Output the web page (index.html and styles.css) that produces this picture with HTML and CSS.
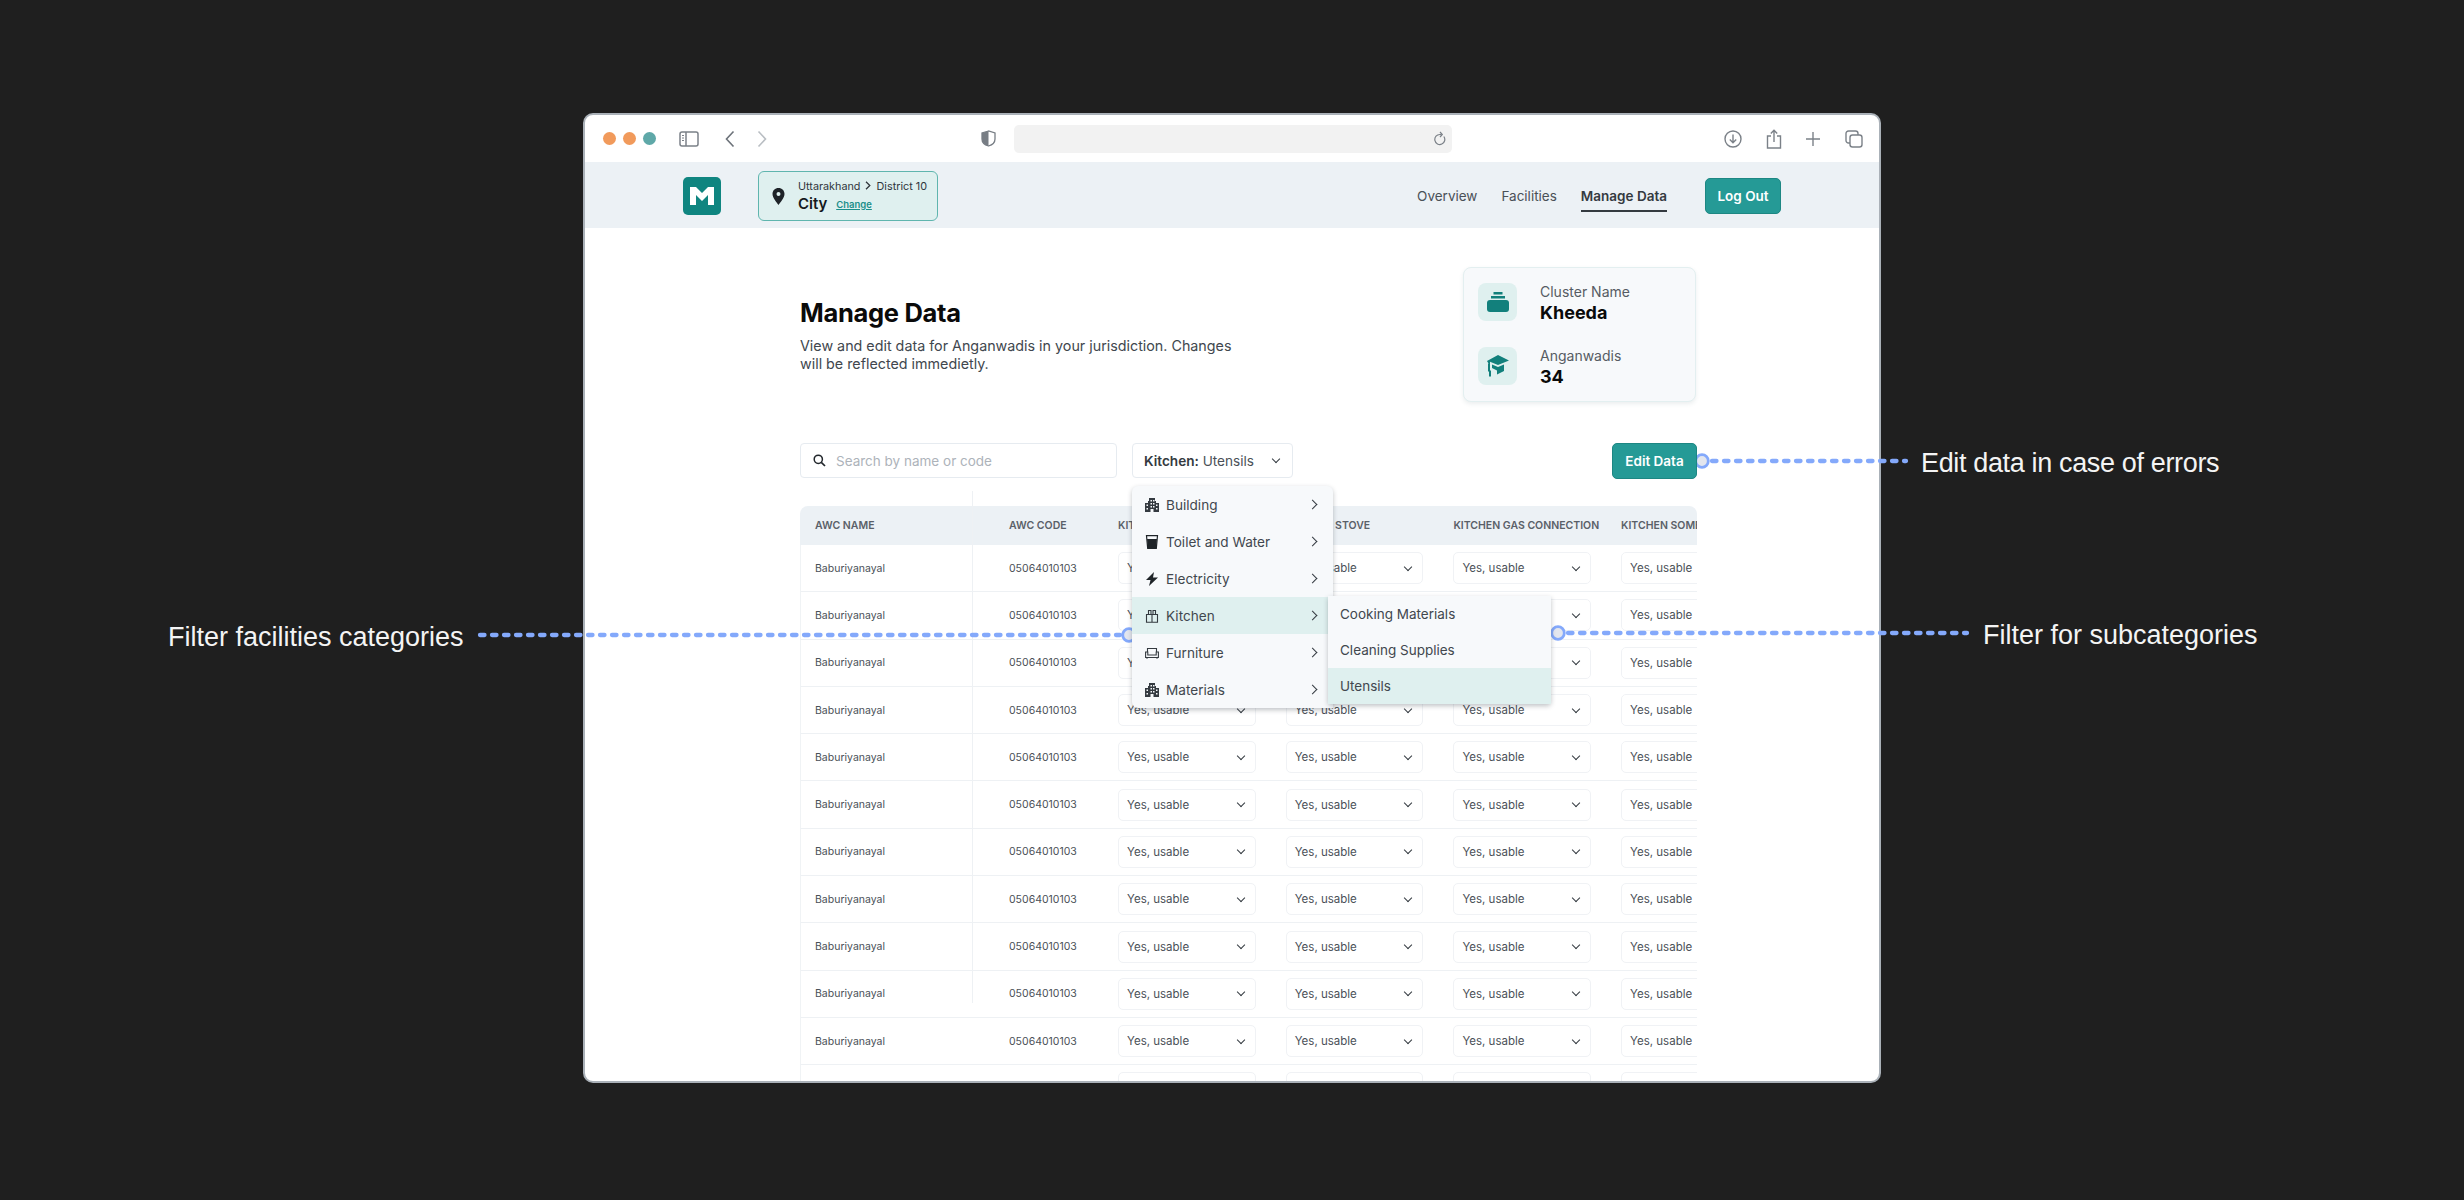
FILE: index.html
```html
<!DOCTYPE html>
<html>
<head>
  <meta name="viewport" content="width=device-width, initial-scale=1.0">
  <title>Manage Data</title>
  <link rel="stylesheet" href="styles.css">
</head>
<body>
  <svg class="sprite" width="0" height="0">
    <symbol id="i-building" viewBox="0 0 14 14">
      <path fill="#343a40" fill-rule="evenodd" d="M4 0h6v3h1v2h3v9H8.500v-3h-3v3H0V5h3V3h1zM5.500 2v1.500H7V2zM8 2v1.500h1.500V2zM5.500 5v1.500H7V5zM8 5v1.500h1.500V5zM1.500 6.500V8H3V6.500zM11 6.500V8h1.500V6.500zM5.500 8v1.500H7V8zM8 8v1.500h1.500V8zM1.500 10v1.500H3V10zM11 10v1.500h1.500V10z"/>
    </symbol>
  </svg>

  <!-- browser window -->
  <div class="window">
    <div class="browser-bar">
      <div class="lights">
        <span class="light light-orange"></span>
        <span class="light light-orange"></span>
        <span class="light light-teal"></span>
      </div>
      <svg class="bar-icon sidebar-icon" width="20" height="16" viewBox="0 0 20 16">
        <rect x="1" y="1" width="18" height="14" rx="2" fill="none" stroke="#7b8188" stroke-width="1.500"/>
        <path d="M7 1v14" stroke="#7b8188" stroke-width="1.500"/>
        <path d="M3 4.500h2M3 7h2M3 9.500h2" stroke="#7b8188"/>
      </svg>
      <svg class="bar-icon back-icon" width="10" height="18" viewBox="0 0 10 18">
        <path d="M8.500 1.500 1.500 9l7 7.500" fill="none" stroke="#6d737a" stroke-width="1.600"/>
      </svg>
      <svg class="bar-icon forward-icon" width="10" height="18" viewBox="0 0 10 18">
        <path d="M1.500 1.500 8.500 9l-7 7.500" fill="none" stroke="#b9bec3" stroke-width="1.600"/>
      </svg>
      <svg class="bar-icon shield-icon" width="15" height="17" viewBox="0 0 15 17">
        <path d="M7.500 1 1 3v6c0 3.500 3 6 6.500 7 3.500-1 6.500-3.500 6.500-7V3z" fill="#fff" stroke="#777d84" stroke-width="1.300"/>
        <path d="M7.500 1 1 3v6c0 3.500 3 6 6.500 7z" fill="#777d84"/>
      </svg>
      <div class="url-bar">
        <svg width="12" height="15" viewBox="0 0 12 15">
          <path d="M9.800 5.500A5 5 0 1 1 6 3.500h1.500" fill="none" stroke="#7b8188" stroke-width="1.200"/>
          <path d="M6 1l2.300 2.500L6 6" fill="none" stroke="#7b8188" stroke-width="1.200"/>
        </svg>
      </div>
      <div class="bar-actions">
        <svg width="18" height="18" viewBox="0 0 18 18">
          <circle cx="9" cy="9" r="8" fill="none" stroke="#7b8188" stroke-width="1.400"/>
          <path d="M9 4.500v8M5.800 9.500 9 12.700l3.200-3.200" fill="none" stroke="#7b8188" stroke-width="1.400"/>
        </svg>
        <svg width="16" height="20" viewBox="0 0 16 20">
          <path d="M5 7H1.500v12h13V7H11" fill="none" stroke="#7b8188" stroke-width="1.400"/>
          <path d="M8 13V1.500M4.800 4.500 8 1.300l3.200 3.200" fill="none" stroke="#7b8188" stroke-width="1.400"/>
        </svg>
        <svg width="16" height="16" viewBox="0 0 16 16">
          <path d="M8 1v14M1 8h14" stroke="#7b8188" stroke-width="1.400"/>
        </svg>
        <svg width="18" height="18" viewBox="0 0 18 18">
          <rect x="1" y="1" width="12" height="12" rx="2.500" fill="none" stroke="#7b8188" stroke-width="1.400"/>
          <rect x="5" y="5" width="12" height="12" rx="2.500" fill="#fff" stroke="#7b8188" stroke-width="1.400"/>
        </svg>
      </div>
    </div>

    <nav class="app-nav">
      <div class="logo">
        <svg width="24" height="18" viewBox="0 0 24 18">
          <path fill="#fff" d="M0 0h6l6 6 6-6h6v18h-6V8l-6 6-6-6v10H0z"/>
        </svg>
      </div>
      <div class="location">
        <svg width="13" height="17" viewBox="0 0 13 17">
          <path fill="#1e2328" fill-rule="evenodd" d="M6.500 0C3 0 .5 2.600.5 6c0 4 4.300 8.500 6 11 1.700-2.500 6-7 6-11 0-3.400-2.500-6-6-6zm0 4a2 2 0 1 1 0 4 2 2 0 0 1 0-4z"/>
        </svg>
        <div class="location-text">
          <div class="location-path">Uttarakhand
            <svg width="6" height="9" viewBox="0 0 6 9"><path d="M1 .8 4.800 4.500 1 8.200" fill="none" stroke="#30363c" stroke-width="1.300"/></svg>
            District 10</div>
          <div class="location-city">City <a class="location-change">Change</a></div>
        </div>
      </div>
      <div class="nav-links">
        <a class="nav-link">Overview</a>
        <a class="nav-link">Facilities</a>
        <a class="nav-link nav-link-active">Manage Data</a>
      </div>
      <button class="btn btn-logout">Log Out</button>
    </nav>

    <main class="content">
      <div class="page-head">
        <div class="page-intro">
          <h1 class="page-title">Manage Data</h1>
          <p class="page-desc">View and edit data for Anganwadis in your jurisdiction. Changes will be reflected immedietly.</p>
        </div>
        <div class="summary-card">
          <div class="summary-row">
            <div class="summary-icon">
              <svg width="22" height="20" viewBox="0 0 22 20">
                <path fill="#12807c" d="M6.500 0h9v2.500h-9zM4 4h14v2.500H4z"/>
                <rect y="8" width="22" height="12" rx="3" fill="#12807c"/>
              </svg>
            </div>
            <div>
              <div class="summary-label">Cluster Name</div>
              <div class="summary-value">Kheeda</div>
            </div>
          </div>
          <div class="summary-row">
            <div class="summary-icon">
              <svg width="24" height="24" viewBox="0 0 24 24">
                <path fill="#12807c" d="M12 1 23 6.500 12 11 4 7.800V12L1 7z"/>
                <path fill="#12807c" d="M6 10.500 12 13l6-2.500v6.500l-7 3.500v-4L6 14zM2 9.500h2v7H5v6H3v-5H2z"/>
              </svg>
            </div>
            <div>
              <div class="summary-label">Anganwadis</div>
              <div class="summary-value">34</div>
            </div>
          </div>
        </div>
      </div>

      <div class="controls">
        <div class="search">
          <svg width="13" height="13" viewBox="0 0 13 13">
            <circle cx="5.300" cy="5.300" r="4.100" fill="none" stroke="#22272c" stroke-width="1.500"/>
            <path d="M8.300 8.300 12 12" stroke="#22272c" stroke-width="1.700"/>
          </svg>
          <span>Search by name or code</span>
        </div>
        <div class="filter"><span><b>Kitchen:</b> Utensils</span><i class="chev-down"></i></div>
        <button class="btn btn-edit">Edit Data</button>

        <!-- category menu -->
        <ul class="menu">
          <li class="menu-item">
            <svg class="menu-icon" viewBox="0 0 14 14"><use href="#i-building"/></svg>Building<i class="chev-right"></i>
          </li>
          <li class="menu-item">
            <svg class="menu-icon" viewBox="0 0 14 14">
              <path d="M1.500 .7h11L11.300 13.300H2.700z" fill="none" stroke="#1f2428" stroke-width="1.200"/>
              <path d="M2 4h10l-1 10H3z" fill="#1f2428"/>
            </svg>Toilet and Water<i class="chev-right"></i>
          </li>
          <li class="menu-item">
            <svg class="menu-icon" viewBox="0 0 14 14"><path fill="#1f2428" d="M9 0 1 8h4.500L4 14l9-8.500H8z"/></svg>Electricity<i class="chev-right"></i>
          </li>
          <li class="menu-item menu-item-open">
            <svg class="menu-icon" viewBox="0 0 14 14">
              <path d="M1.500 5.500h11v7.700h-11zM7 5.500v7.700M3.500 5.500V1.500h2.500v4M8 5.500V1.500h2.500v4" fill="none" stroke="#343a40" stroke-width="1.100"/>
            </svg>Kitchen<i class="chev-right"></i>
            <ul class="submenu">
              <li class="submenu-item">Cooking Materials</li>
              <li class="submenu-item">Cleaning Supplies</li>
              <li class="submenu-item submenu-item-active">Utensils</li>
            </ul>
          </li>
          <li class="menu-item">
            <svg class="menu-icon" viewBox="0 0 14 14">
              <path d="M2.500 6V2.500h9V6M.6 6h2.200v3h8.400V6h2.200v5.500H.6zM2 11.500v1.300M12 11.500v1.300" fill="none" stroke="#343a40" stroke-width="1.100"/>
            </svg>Furniture<i class="chev-right"></i>
          </li>
          <li class="menu-item">
            <svg class="menu-icon" viewBox="0 0 14 14"><use href="#i-building"/></svg>Materials<i class="chev-right"></i>
          </li>
        </ul>
      </div>

      <div class="table-area">
        <span class="col-line"></span>
        <div class="table">
          <div class="table-row table-head">
            <div class="cell-name">AWC NAME</div>
            <div>AWC CODE</div>
            <div>KITCHEN UTENSILS</div>
            <div>KITCHEN STOVE</div>
            <div>KITCHEN GAS CONNECTION</div>
            <div>KITCHEN SOMETHING</div>
          </div>
          <div class="table-row">
            <div class="cell-name">Baburiyanayal</div><div>05064010103</div>
            <div class="select">Yes, usable<i class="chev-down"></i></div><div class="select">Yes, usable<i class="chev-down"></i></div><div class="select">Yes, usable<i class="chev-down"></i></div><div class="select">Yes, usable<i class="chev-down"></i></div>
          </div>
          <div class="table-row">
            <div class="cell-name">Baburiyanayal</div><div>05064010103</div>
            <div class="select">Yes, usable<i class="chev-down"></i></div><div class="select">Yes, usable<i class="chev-down"></i></div><div class="select">Yes, usable<i class="chev-down"></i></div><div class="select">Yes, usable<i class="chev-down"></i></div>
          </div>
          <div class="table-row">
            <div class="cell-name">Baburiyanayal</div><div>05064010103</div>
            <div class="select">Yes, usable<i class="chev-down"></i></div><div class="select">Yes, usable<i class="chev-down"></i></div><div class="select">Yes, usable<i class="chev-down"></i></div><div class="select">Yes, usable<i class="chev-down"></i></div>
          </div>
          <div class="table-row">
            <div class="cell-name">Baburiyanayal</div><div>05064010103</div>
            <div class="select">Yes, usable<i class="chev-down"></i></div><div class="select">Yes, usable<i class="chev-down"></i></div><div class="select">Yes, usable<i class="chev-down"></i></div><div class="select">Yes, usable<i class="chev-down"></i></div>
          </div>
          <div class="table-row">
            <div class="cell-name">Baburiyanayal</div><div>05064010103</div>
            <div class="select">Yes, usable<i class="chev-down"></i></div><div class="select">Yes, usable<i class="chev-down"></i></div><div class="select">Yes, usable<i class="chev-down"></i></div><div class="select">Yes, usable<i class="chev-down"></i></div>
          </div>
          <div class="table-row">
            <div class="cell-name">Baburiyanayal</div><div>05064010103</div>
            <div class="select">Yes, usable<i class="chev-down"></i></div><div class="select">Yes, usable<i class="chev-down"></i></div><div class="select">Yes, usable<i class="chev-down"></i></div><div class="select">Yes, usable<i class="chev-down"></i></div>
          </div>
          <div class="table-row">
            <div class="cell-name">Baburiyanayal</div><div>05064010103</div>
            <div class="select">Yes, usable<i class="chev-down"></i></div><div class="select">Yes, usable<i class="chev-down"></i></div><div class="select">Yes, usable<i class="chev-down"></i></div><div class="select">Yes, usable<i class="chev-down"></i></div>
          </div>
          <div class="table-row">
            <div class="cell-name">Baburiyanayal</div><div>05064010103</div>
            <div class="select">Yes, usable<i class="chev-down"></i></div><div class="select">Yes, usable<i class="chev-down"></i></div><div class="select">Yes, usable<i class="chev-down"></i></div><div class="select">Yes, usable<i class="chev-down"></i></div>
          </div>
          <div class="table-row">
            <div class="cell-name">Baburiyanayal</div><div>05064010103</div>
            <div class="select">Yes, usable<i class="chev-down"></i></div><div class="select">Yes, usable<i class="chev-down"></i></div><div class="select">Yes, usable<i class="chev-down"></i></div><div class="select">Yes, usable<i class="chev-down"></i></div>
          </div>
          <div class="table-row">
            <div class="cell-name">Baburiyanayal</div><div>05064010103</div>
            <div class="select">Yes, usable<i class="chev-down"></i></div><div class="select">Yes, usable<i class="chev-down"></i></div><div class="select">Yes, usable<i class="chev-down"></i></div><div class="select">Yes, usable<i class="chev-down"></i></div>
          </div>
          <div class="table-row">
            <div class="cell-name">Baburiyanayal</div><div>05064010103</div>
            <div class="select">Yes, usable<i class="chev-down"></i></div><div class="select">Yes, usable<i class="chev-down"></i></div><div class="select">Yes, usable<i class="chev-down"></i></div><div class="select">Yes, usable<i class="chev-down"></i></div>
          </div>
          <div class="table-row">
            <div class="select select-blank"></div><div class="select"></div><div class="select"></div><div class="select"></div>
          </div>
        </div>
      </div>
    </main>
  </div>

  <!-- callouts -->
  <svg class="callout-lines" width="2464" height="1200" viewBox="0 0 2464 1200">
    <path class="callout-dash" d="M480 635H1120"/>
    <path class="callout-dash" d="M1712 461H1906"/>
    <path class="callout-dash" d="M1568 633H1967"/>
    <circle class="callout-dot" cx="1129" cy="635" r="6.300"/>
    <circle class="callout-dot" cx="1702" cy="461" r="6.300"/>
    <circle class="callout-dot" cx="1558" cy="633" r="6.300"/>
  </svg>
  <div class="callout callout-filter">Filter facilities categories</div>
  <div class="callout callout-edit">Edit data in case of errors</div>
  <div class="callout callout-sub">Filter for subcategories</div>
</body>
</html>
```

FILE: styles.css
```css
* {
  margin: 0;
  padding: 0;
  box-sizing: border-box;
}

body {
  width: 2464px;
  height: 1200px;
  padding: 113px 0 0 583px;
  background: #1f1f1f;
  font-family: Inter, "Liberation Sans", sans-serif;
  color: #4a5057;
  overflow: hidden;
  position: relative;
}

.sprite {
  position: absolute;
}

ul {
  list-style: none;
}

/* Browser window */
.window {
  width: 1298px;
  height: 970px;
  background: #fff;
  border: 2px solid #aab1b8;
  border-radius: 10px;
  overflow: hidden;
}

.browser-bar {
  height: 47px;
  display: flex;
  align-items: center;
  padding-left: 18px;
}

.lights {
  display: flex;
  gap: 7px;
}

.light {
  width: 13px;
  height: 13px;
  border-radius: 50%;
}

.light-orange {
  background: #f19a5b;
}

.light-teal {
  background: #5fa8a8;
}

.sidebar-icon {
  margin-left: 23px;
}

.back-icon {
  margin-left: 26px;
}

.forward-icon {
  margin-left: 22px;
}

.shield-icon {
  margin-left: 214px;
}

.url-bar {
  width: 438px;
  height: 28px;
  margin-left: 18px;
  display: flex;
  align-items: center;
  justify-content: flex-end;
  padding-right: 6px;
  background: #f2f2f2;
  border-radius: 5px;
}

.bar-actions {
  margin-left: 272px;
  width: 139px;
  display: flex;
  align-items: center;
  justify-content: space-between;
}

/* App nav */
.app-nav {
  height: 66px;
  display: flex;
  align-items: center;
  padding: 2px 98px 0;
  background: #ecf1f5;
}

.logo {
  width: 38px;
  height: 38px;
  display: flex;
  align-items: center;
  justify-content: center;
  background: #0f8580;
  border-radius: 5px;
}

.location {
  width: 180px;
  height: 50px;
  margin-left: 37px;
  display: flex;
  align-items: center;
  gap: 13px;
  padding-left: 13px;
  background: #dff0ef;
  border: 1px solid #5fb5ae;
  border-radius: 6px;
}

.location-path {
  font-size: 10.800px;
  line-height: 16px;
  color: #30363c;
}

.location-path svg {
  margin: 0 2px;
}

.location-city {
  font-size: 15px;
  line-height: 18px;
  font-weight: 600;
  color: #15191d;
}

.location-change {
  margin-left: 5px;
  font-size: 9.500px;
  font-weight: 600;
  color: #1b8f8a;
  text-decoration: underline;
  vertical-align: 1px;
}

.nav-links {
  margin-left: auto;
  display: flex;
  gap: 24px;
}

.nav-link {
  padding: 7px 0 5px;
  font-size: 13.500px;
  line-height: 18px;
  border-bottom: 2px solid transparent;
}

.nav-link-active {
  font-weight: 600;
  color: #343a40;
  border-bottom-color: #343a40;
}

.btn {
  font-family: inherit;
  font-size: 13.500px;
  font-weight: 600;
  color: #fff;
  background: #259a96;
  border: 1px solid #1d8783;
  border-radius: 5px;
}

.btn-logout {
  width: 76px;
  height: 36px;
  margin-left: 38px;
}

/* Page content */
.content {
  padding: 39px 0 0 215px;
  width: 1112px;
}

.page-head {
  display: flex;
  justify-content: space-between;
  align-items: flex-start;
  width: 896px;
}

.page-intro {
  width: 450px;
  padding-top: 29px;
}

.page-title {
  font-size: 25.500px;
  line-height: 34px;
  font-weight: 700;
  color: #0a0a0a;
  letter-spacing: -0.3px;
}

.page-desc {
  margin-top: 7px;
  font-size: 14.300px;
  line-height: 18px;
  color: #41474e;
}

.summary-card {
  width: 233px;
  height: 135px;
  display: flex;
  flex-direction: column;
  gap: 22px;
  padding: 15px 14px;
  background: #f7f9fb;
  border: 1px solid #e3eff0;
  border-radius: 8px;
  box-shadow: 0 2px 4px rgba(60, 90, 100, 0.1);
}

.summary-row {
  display: flex;
  gap: 23px;
}

.summary-icon {
  width: 39px;
  height: 38px;
  display: flex;
  align-items: center;
  justify-content: center;
  background: #dff0ef;
  border-radius: 8px;
}

.summary-label {
  font-size: 14px;
  line-height: 18px;
  color: #565c63;
}

.summary-value {
  font-size: 18px;
  line-height: 24px;
  font-weight: 700;
  color: #0a0a0a;
}

/* Search, filter and edit */
.controls {
  position: relative;
  z-index: 2;
  display: flex;
  align-items: flex-start;
  gap: 15px;
  width: 897px;
  margin-top: 41px;
}

.search {
  width: 317px;
  height: 35px;
  display: flex;
  align-items: center;
  gap: 10px;
  padding-left: 12px;
  font-size: 13.500px;
  color: #adb3ba;
  border: 1px solid #e6ebf0;
  border-radius: 4px;
}

.filter {
  width: 161px;
  height: 35px;
  display: flex;
  align-items: center;
  justify-content: space-between;
  padding: 0 13px 0 11px;
  font-size: 13.600px;
  color: #4a5057;
  border: 1px solid #e6ebf0;
  border-radius: 4px;
}

.filter b {
  font-weight: 600;
  color: #343a40;
}

.btn-edit {
  width: 85px;
  height: 36px;
  margin-left: auto;
}

.chev-down {
  display: block;
  width: 6px;
  height: 6px;
  margin-top: -3px;
  border-right: 1.500px solid #343a40;
  border-bottom: 1.500px solid #343a40;
  transform: rotate(45deg);
}

.chev-right {
  display: block;
  width: 7px;
  height: 7px;
  margin-left: auto;
  margin-right: 2px;
  border-right: 1.300px solid #343a40;
  border-top: 1.300px solid #343a40;
  transform: rotate(45deg);
}

/* Category menu */
.menu {
  position: absolute;
  top: 43px;
  left: 332px;
  width: 201px;
  background: #f7f9fb;
  border-radius: 6px 6px 0 6px;
  box-shadow: 0 2px 5px rgba(30, 40, 50, 0.28);
}

.menu-item {
  position: relative;
  height: 37px;
  display: flex;
  align-items: center;
  gap: 7px;
  padding: 0 15px 0 13px;
  font-size: 13.600px;
  color: #41474e;
}

.menu-item-open {
  background: #dff0ef;
}

.menu-icon {
  width: 14px;
  height: 14px;
}

.submenu {
  position: absolute;
  top: -1px;
  left: 196px;
  width: 223px;
  background: #f7f9fb;
  border-radius: 0 0 4px 4px;
  box-shadow: 0 2px 5px rgba(30, 40, 50, 0.28);
}

.submenu-item {
  height: 36px;
  display: flex;
  align-items: center;
  padding-left: 12px;
  font-size: 13.500px;
}

.submenu-item-active {
  background: #dff0ef;
}

/* Table */
.table-area {
  position: relative;
  margin-top: 27px;
}

.col-line {
  position: absolute;
  top: -15px;
  left: 172px;
  width: 1px;
  height: 512px;
  background: #eef1f4;
}

.table {
  width: 897px;
  overflow: hidden;
  border-radius: 8px 8px 0 0;
}

.table-row {
  height: 47.300px;
  display: grid;
  grid-template-columns: 208px 109px repeat(4, 167.700px);
  align-items: center;
  font-size: 10.500px;
  white-space: nowrap;
  border-left: 1px solid #f0f3f5;
  border-bottom: 1px solid #eef1f4;
}

.table-head {
  height: 39px;
  font-weight: 600;
  color: #5a6068;
  background: #ecf1f5;
  border: 0;
}

.table-head .cell-name {
  padding-left: 15px;
}

.table-head > :nth-child(2) {
  padding-left: 1px;
}

.table-head > :nth-child(n+3) {
  margin-left: 1px;
}

.cell-name {
  padding-left: 14px;
}

.select {
  width: 137.500px;
  height: 32px;
  display: flex;
  align-items: center;
  justify-content: space-between;
  padding: 0 11px 0 8px;
  font-size: 11.500px;
  border: 1px solid #f0f2f5;
  border-radius: 5px;
}

.select-blank {
  grid-column: 3;
}

/* Callouts */
.callout-lines {
  position: absolute;
  top: 0;
  left: 0;
}

.callout-dash {
  fill: none;
  stroke: #84a9fb;
  stroke-width: 4.300;
  stroke-linecap: round;
  stroke-dasharray: 4.500 7.500;
}

.callout-dot {
  fill: #e3e6ee;
  stroke: #84a9fb;
  stroke-width: 2.800;
}

.callout {
  position: absolute;
  font-family: "Liberation Sans", sans-serif;
  font-size: 27px;
  line-height: 32px;
  color: #f4f4f4;
  white-space: nowrap;
}

.callout-filter {
  top: 621px;
  left: 168px;
}

.callout-edit {
  top: 447px;
  left: 1921px;
  letter-spacing: -0.35px;
}

.callout-sub {
  top: 619px;
  left: 1983px;
}
```
